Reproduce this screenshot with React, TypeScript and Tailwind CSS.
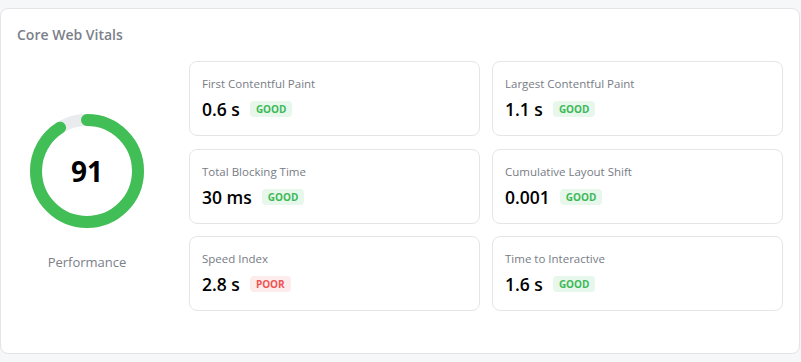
import React from "react";

type Status = "GOOD" | "POOR";

type Metric = {
  label: string;
  value: string;
  status: Status;
};

const METRICS: Metric[] = [
  { label: "First Contentful Paint", value: "0.6 s", status: "GOOD" },
  { label: "Largest Contentful Paint", value: "1.1 s", status: "GOOD" },
  { label: "Total Blocking Time", value: "30 ms", status: "GOOD" },
  { label: "Cumulative Layout Shift", value: "0.001", status: "GOOD" },
  { label: "Speed Index", value: "2.8 s", status: "POOR" },
  { label: "Time to Interactive", value: "1.6 s", status: "GOOD" },
];

const SCORE = 91;

function ScoreRing({ score }: { score: number }) {
  const r = 51;
  const c = 2 * Math.PI * r;
  const filled = (score / 100) * c;
  return (
    <div className="relative h-[114px] w-[114px]">
      <svg width="114" height="114" viewBox="0 0 114 114" className="-rotate-90">
        <circle cx="57" cy="57" r={r} fill="none" stroke="#e9ebee" strokeWidth="12" />
        <circle
          cx="57"
          cy="57"
          r={r}
          fill="none"
          stroke="#41bf56"
          strokeWidth="12"
          strokeLinecap="round"
          strokeDasharray={`${filled} ${c}`}
        />
      </svg>
      <div className="absolute inset-0 flex items-center justify-center text-[28px] font-bold text-black">
        {score}
      </div>
    </div>
  );
}

function StatusBadge({ status }: { status: Status }) {
  const good = status === "GOOD";
  return (
    <span
      className={
        good
          ? "rounded-[4px] bg-[#e8f7ec] px-[6px] py-[2px] text-[10px] font-bold leading-3 text-[#3cb957]"
          : "rounded-[4px] bg-[#fdecec] px-[6px] py-[2px] text-[10px] font-bold leading-3 text-[#f05454]"
      }
    >
      {status}
    </span>
  );
}

function MetricCard({ metric }: { metric: Metric }) {
  return (
    <div className="h-[75px] rounded-lg border border-[#e3e5e8] bg-white px-3 pt-[14px]">
      <div className="text-[11.5px] leading-4 text-[#777c85]">{metric.label}</div>
      <div className="mt-[5px] flex items-center gap-[10px]">
        <span className="text-[17.5px] font-semibold leading-6 text-black">{metric.value}</span>
        <StatusBadge status={metric.status} />
      </div>
    </div>
  );
}

export default function App() {
  return (
    <div
      className="min-h-[362px] bg-[#f6f7f9] pt-2"
      style={{ fontFamily: '"Open Sans", "Noto Sans", sans-serif' }}
    >
      <section className="mr-px rounded-lg border border-[#e2e4e8] bg-white px-4 pb-[42px] pt-4">
        <h2 className="text-[14px] font-semibold leading-5 text-[#7b8089]">Core Web Vitals</h2>
        <div className="mt-4 flex items-start gap-8">
          <div className="flex w-[140px] flex-col items-center pt-[53px]">
            <ScoreRing score={SCORE} />
            <div className="mt-[25px] text-[13px] leading-[18px] text-[#7b8089]">Performance</div>
          </div>
          <div className="grid flex-1 grid-cols-2 gap-x-3 gap-y-[12.5px]">
            {METRICS.map((m) => (
              <MetricCard key={m.label} metric={m} />
            ))}
          </div>
        </div>
      </section>
    </div>
  );
}
